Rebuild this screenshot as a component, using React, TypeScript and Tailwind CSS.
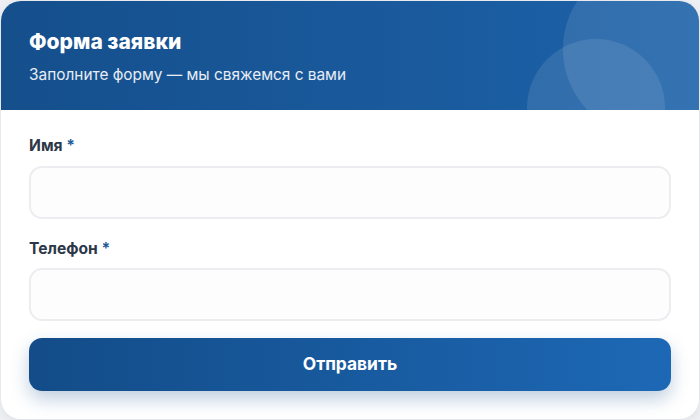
export default function App() {
  return (
    <div
      className="min-h-screen bg-[#eef0f3] p-px"
      style={{ fontFamily: "Inter, 'Noto Sans', sans-serif" }}
    >
      <div className="h-[418px] overflow-hidden rounded-[20px] bg-white shadow-[0_2px_10px_rgba(15,40,80,0.08)]">
        {/* header */}
        <div className="relative h-[109px] overflow-hidden bg-gradient-to-r from-[#154f8c] to-[#1d62a9] px-[28px] pt-[27px]">
          <div className="absolute -right-[40px] -top-[40px] h-[176px] w-[176px] rounded-full bg-white/10" />
          <div className="absolute left-[526px] top-[38px] h-[138px] w-[138px] rounded-full bg-white/10" />
          <h1 className="relative text-[21px] font-extrabold leading-[28px] text-white">Форма заявки</h1>
          <p className="relative mt-[9px] text-[15.4px] leading-[20px] text-white/90">
            Заполните форму — мы свяжемся с вами
          </p>
        </div>

        {/* form */}
        <form className="flex flex-col px-[28px] pt-[26px]" onSubmit={(e) => e.preventDefault()}>
          <label className="text-[15.6px] font-bold leading-[20px] text-[#2d3748]">
            Имя <span className="text-[#1d5a99]">*</span>
          </label>
          <input className="mt-[10px] h-[53px] rounded-[13px] border-2 border-[#ebedf0] bg-[#fdfdfd] px-4 outline-none" />

          <label className="mt-[20px] text-[15.6px] font-bold leading-[20px] text-[#2d3748]">
            Телефон <span className="text-[#1d5a99]">*</span>
          </label>
          <input className="mt-[9px] h-[53px] rounded-[13px] border-2 border-[#ebedf0] bg-[#fdfdfd] px-4 outline-none" />

          <button
            type="submit"
            className="mt-[17px] h-[53px] rounded-[13px] bg-gradient-to-r from-[#134c88] to-[#1d68b5] text-[17.4px] font-bold text-white shadow-[0_8px_18px_rgba(22,78,140,0.28)]"
          >
            Отправить
          </button>
        </form>
      </div>
    </div>
  );
}
